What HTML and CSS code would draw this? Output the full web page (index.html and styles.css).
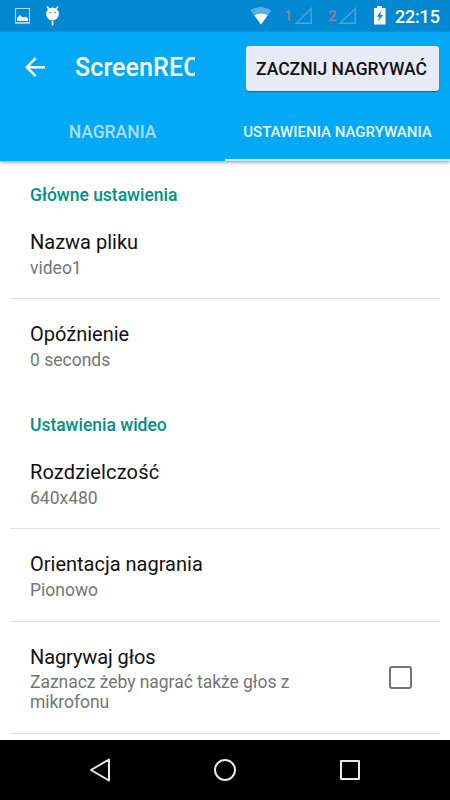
FILE: index.html
```html
<!DOCTYPE html>
<html lang="pl">
<head>
<meta charset="utf-8">
<title>ScreenREC</title>
<link rel="stylesheet" href="styles.css">
</head>
<body>
<div class="screen">
  <header class="top">
    <div class="status">
      <svg class="notifications" width="80" height="32" viewBox="0 0 80 32">
        <path d="M15.5 8.5h14v14h-14z" fill="none" stroke="#a9daf3" stroke-width="1.1"/>
        <path d="M15 23.3h15" stroke="#a9daf3" stroke-width="1"/>
        <path d="M17 21v-3l3-3 2 2 2 .5 2-.8 2 1.8V21z" fill="#fff"/>
        <circle cx="52.5" cy="14" r="6.4" fill="#fff"/>
        <path d="M49 9l-2-2.5M56 9l2-2.5M52.5 21v4.5" stroke="#fff" stroke-width="1.6"/>
        <circle cx="50" cy="12.5" r=".8" fill="#0288d1"/><circle cx="55" cy="12.5" r=".8" fill="#0288d1"/>
      </svg>
      <svg class="wifi" width="24" height="32" viewBox="0 0 24 32">
        <path d="M1.5 10.5Q12 3.5 22.5 10.5L12 24.5z" fill="#54b0e3"/>
        <path d="M5.3 15.3Q12 11.5 18.7 15.3L12 24.5z" fill="#fff"/>
      </svg>
      <span class="sim first">1</span>
      <svg class="signal" width="20" height="32" viewBox="0 0 20 32"><path d="M3.2 23.2L18.2 8.5V23.2z" fill="none" stroke="#43a7de" stroke-width="1.5"/></svg>
      <span class="sim second">2</span>
      <svg class="signal" width="20" height="32" viewBox="0 0 20 32"><path d="M3.2 23.2L18.2 8.5V23.2z" fill="none" stroke="#43a7de" stroke-width="1.5"/></svg>
      <svg class="battery" width="14" height="32" viewBox="0 0 14 32">
        <path d="M4 6h5v2h3.5v16.5H1V8h3z" fill="#fff"/><path d="M8.5 10.5L3.8 16.7h2.6L5 21.5l5-6.5H7.3z" fill="#0288d1"/>
      </svg>
      <span class="clock">22:15</span>
    </div>
    <div class="appbar">
      <svg class="back" width="24" height="24" viewBox="0 0 24 24"><path d="M22 12.2H3.8M12.7 3.2L3.7 12.2l9 9" fill="none" stroke="#fff" stroke-width="2.4"/></svg>
      <h1 class="title">ScreenREC</h1>
      <button class="record">ZACZNIJ NAGRYWAĆ</button>
    </div>
    <nav class="tabs">
      <div class="tab"><span class="tab-label recordings">NAGRANIA</span></div>
      <div class="tab active"><span class="tab-label settings">USTAWIENIA NAGRYWANIA</span></div>
    </nav>
  </header>
  <main class="content">
    <h2 class="section">Główne ustawienia</h2>
    <div class="row line"><div class="name">Nazwa pliku</div><div class="value">video1</div></div>
    <div class="row"><div class="name">Opóźnienie</div><div class="value">0 seconds</div></div>
    <h2 class="section video">Ustawienia wideo</h2>
    <div class="row line"><div class="name resolution">Rozdzielczość</div><div class="value">640x480</div></div>
    <div class="row line orientation"><div class="name">Orientacja nagrania</div><div class="value">Pionowo</div></div>
    <div class="row line voice">
      <div><div class="name">Nagrywaj głos</div><div class="value">Zaznacz żeby nagrać także głos z<br>mikrofonu</div></div>
      <span class="checkbox"></span>
    </div>
  </main>
  <footer class="navbar">
    <svg width="450" height="60" viewBox="0 0 450 60" fill="none" stroke="#e8e8e8" stroke-width="2" stroke-linejoin="round">
      <path d="M91 30L109 19.5V40.5z"/><circle cx="225" cy="30" r="10"/><path d="M341 21h18v18h-18z"/>
    </svg>
  </footer>
</div>
</body>
</html>
```
FILE: styles.css
```css
* { box-sizing: border-box; }
body { margin: 0; font-family: Roboto, "Noto Sans", sans-serif; background: #fff; }
h1, h2 { margin: 0; }
svg { display: block; flex: none; }
.screen { width: 450px; height: 800px; display: flex; flex-direction: column; overflow: hidden; }
.top { height: 161px; flex: none; background: #04a9f6; box-shadow: 0 1px 4px rgba(0,0,0,.45); }
.status { height: 32px; display: flex; background: #0288d1; color: #fff; border-bottom: 1px solid #0390dc; }
.wifi { margin-left: 169px; }
.sim { width: 10px; font-size: 15px; line-height: 33px; font-weight: 500; color: #7e8d96; }
.sim.first { margin-left: 11px; }
.sim.second { margin-left: 15px; }
.signal { margin-left: -1px; }
.battery { margin-left: 16px; }
.clock { margin-left: 8px; font-size: 18px; line-height: 33px; font-weight: 500; letter-spacing: -.2px; white-space: nowrap; }
.appbar { height: 71px; display: flex; align-items: center; padding: 2px 11px 0 23px; }
.title { width: 120px; margin-left: 28px; overflow: hidden; white-space: nowrap; color: #fff; font-size: 25px; line-height: 32px; font-weight: 500; letter-spacing: .1px; }
.back { margin-bottom: 4px; }
.title { margin-bottom: 2px; }
.record { width: 193px; height: 45px; margin: 0 0 1px 51px; padding: 0 2px 0 0; border: 0; border-radius: 3px; background: #e8eaf6; color: #111; font: 500 17.5px/46px Roboto, sans-serif; white-space: nowrap; box-shadow: 0 1px 1px rgba(0,0,0,.35); }
.tabs { height: 58px; display: flex; }
.tab { flex: 1; display: flex; justify-content: center; border-bottom: 2px solid transparent; font-weight: 500; white-space: nowrap; color: #a8dffc; }
.tab.active { color: #ecf8ff; border-color: #cbedfd; }
.tab-label { line-height: 59px; }
.recordings { font-size: 17.5px; }
.settings { font-size: 15px; }
.content { flex: 1; min-height: 0; }
.section { height: 45px; padding: 23px 30px 0; color: #009282; font-size: 17.5px; line-height: 22px; font-weight: 500; letter-spacing: -.03px; }
.row { height: 92.5px; margin: 0 10px; padding: 22.5px 20px 0; }
.line { border-bottom: 1px solid #e2e2e2; }
.name { font-size: 20px; line-height: 26px; color: #111; }
.resolution { letter-spacing: .15px; }
.value { font-size: 17.5px; line-height: 20px; color: #757575; padding-top: 3px; }
.orientation { height: 93px; }
.voice { height: 112.5px; display: flex; justify-content: space-between; }
.voice .name { letter-spacing: -.1px; }
.voice .value { letter-spacing: -.04px; padding-top: 2px; }
.checkbox { width: 23px; height: 23px; margin: 22px 8px 0 0; border: 2.5px solid #757575; border-radius: 3px; }
.navbar { height: 60px; flex: none; background: #000; }
```
